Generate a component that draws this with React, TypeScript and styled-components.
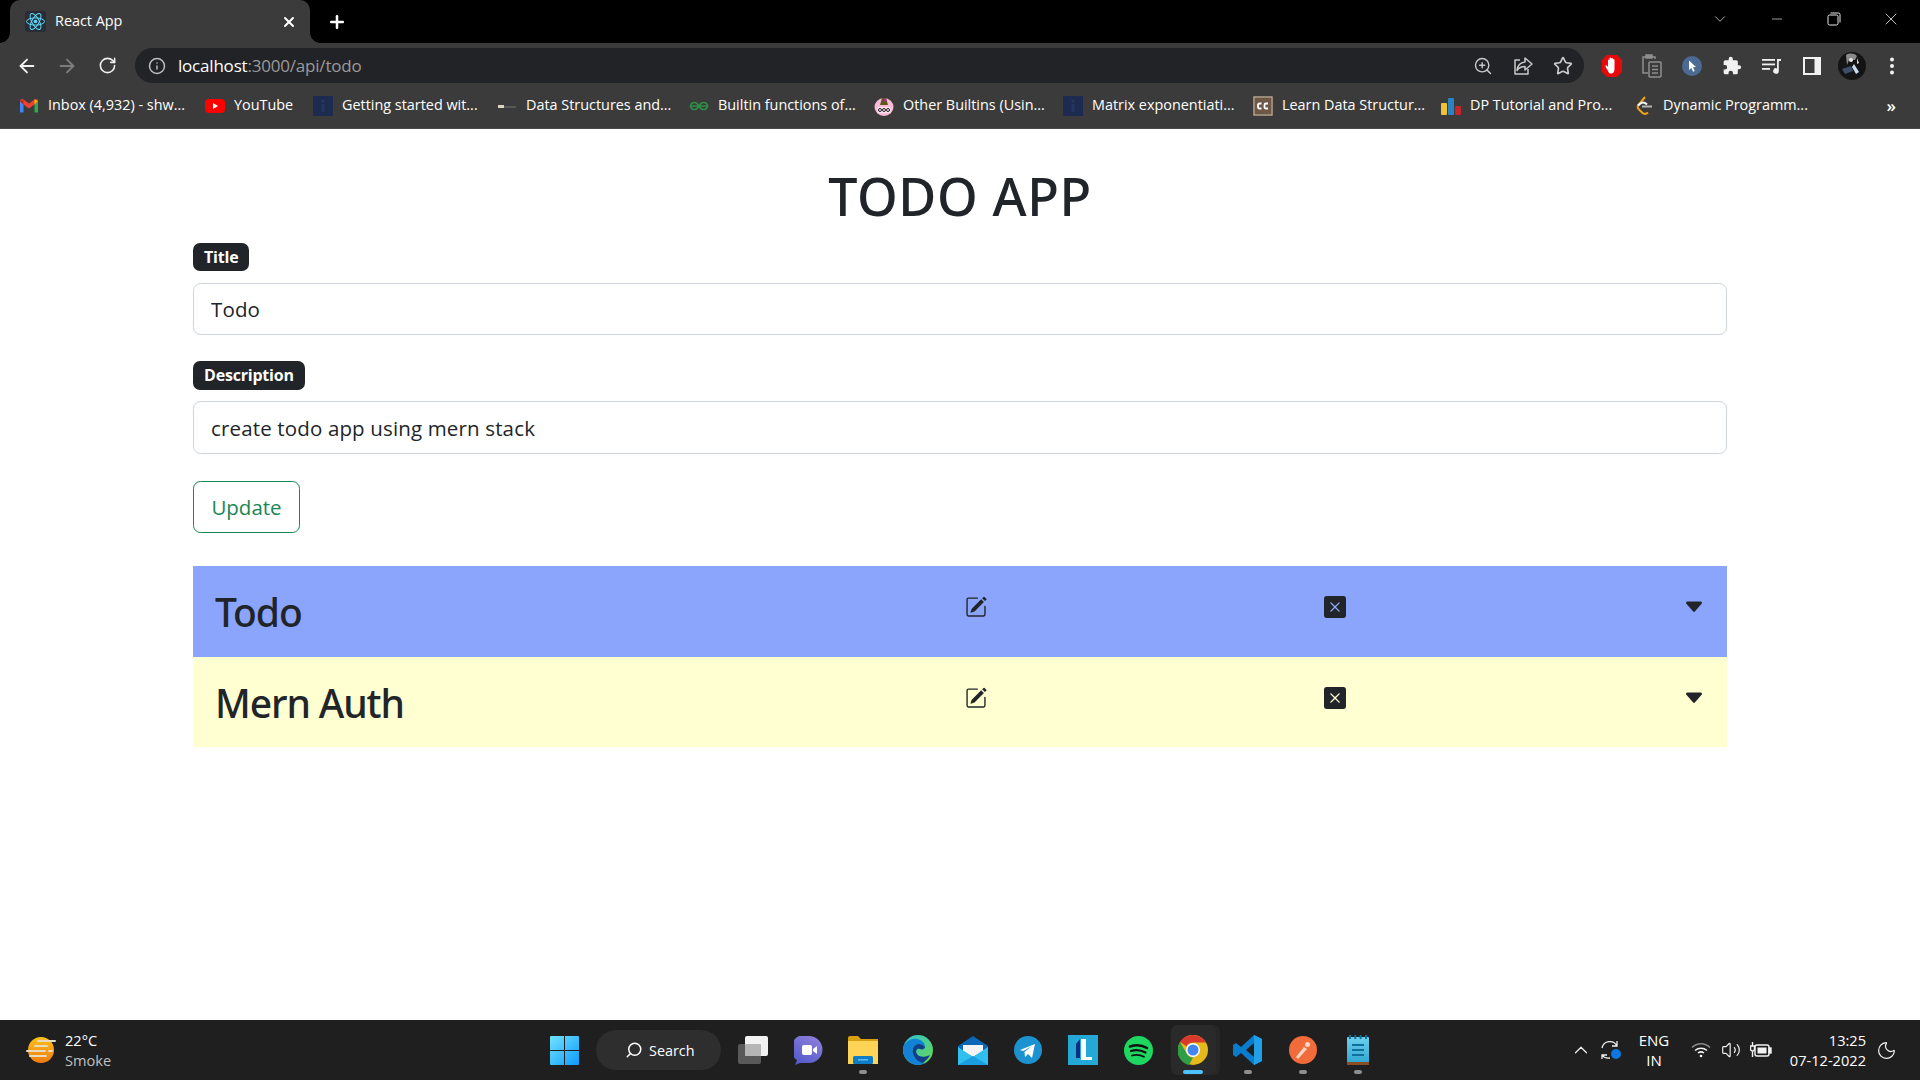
import React from "react";
import styled, { createGlobalStyle } from "styled-components";
import { ArrowLeft, ArrowRight, RotateCw, Info, ZoomIn, Star, X, Plus, ChevronDown, ChevronUp, Minus, Search, Volume2, Moon } from "lucide-react";
import { BsPencilSquare, BsXSquareFill, BsCaretDownFill } from "react-icons/bs";

const UI = `"Open Sans", "Noto Sans", "Liberation Sans", sans-serif`;
const HEAD = `"Noto Sans", "Open Sans", "Liberation Sans", sans-serif`;

const Global = createGlobalStyle`
  html, body { margin: 0; padding: 0; height: 100%; overflow: hidden; background: #fff; }
  #root { height: 100%; }
  * { box-sizing: border-box; }
`;

const Screen = styled.div`
  height: 1080px;
  width: 1920px;
  display: flex;
  flex-direction: column;
  font-family: ${UI};
  overflow: hidden;
`;

/* browser chrome */
const TabStrip = styled.div`
  height: 43px;
  background: #000;
  display: flex;
  align-items: flex-start;
  padding-left: 10px;
  flex: none;
`;
const Tab = styled.div`
  position: relative;
  width: 300px;
  height: 43px;
  background: #3b3b3b;
  border-radius: 10px 10px 0 0;
  display: flex;
  align-items: center;
  padding: 0 13px 0 15px;
  color: #fff;
  font-size: 14.4px;
  &::before, &::after {
    content: "";
    position: absolute;
    bottom: 0;
    width: 10px;
    height: 10px;
  }
  &::before { left: -10px; background: radial-gradient(circle at 0 0, #000 9.5px, #3b3b3b 10px); }
  &::after { right: -10px; background: radial-gradient(circle at 100% 0, #000 9.5px, #3b3b3b 10px); }
`;
const TabTitle = styled.span`
  flex: 1;
  margin: 0 0 2px 9px;
`;
const NewTab = styled.div`
  width: 34px;
  height: 43px;
  margin-left: 10px;
  display: flex;
  align-items: center;
  justify-content: center;
  color: #fff;
`;
const WindowControls = styled.div`
  margin-left: auto;
  display: flex;
  height: 38px;
  color: #e8e8e8;
  padding-right: 1px;
`;
const WindowButton = styled.div`
  width: 57px;
  height: 38px;
  display: flex;
  align-items: center;
  justify-content: center;
`;
const Toolbar = styled.div`
  height: 40px;
  flex: none;
  background: #3b3b3b;
  display: flex;
  align-items: center;
  padding: 5px 0 0 7px;
`;
const NavButton = styled.div<{ $dim?: boolean }>`
  width: 40px;
  height: 35px;
  display: flex;
  align-items: center;
  justify-content: center;
  color: ${(p) => (p.$dim ? "#7d7d7d" : "#f1f1f1")};
`;
const Omnibox = styled.div`
  width: 1449px;
  height: 35px;
  margin-left: 8px;
  background: #222327;
  border-radius: 18px;
  display: flex;
  align-items: center;
  padding: 0 1px 0 12px;
`;
const SiteInfo = styled.div`
  width: 20px;
  height: 20px;
  color: #bdbdbd;
  display: flex;
  align-items: center;
  justify-content: center;
`;
const Url = styled.div`
  margin-left: 11px;
  font-size: 17px;
  letter-spacing: -0.2px;
  color: #9a9a9a;
  flex: 1;
  white-space: nowrap;
`;
const UrlHost = styled.span`
  color: #fff;
`;
const OmniAction = styled.div`
  width: 40px;
  height: 35px;
  display: flex;
  align-items: center;
  justify-content: center;
  color: #c9c9c9;
`;
const Extensions = styled.div`
  display: flex;
  align-items: center;
  margin-left: 8px;
`;
const ExtensionButton = styled.div`
  width: 40px;
  height: 35px;
  display: flex;
  align-items: center;
  justify-content: center;
  color: #f1f1f1;
`;
const Bookmarks = styled.div`
  height: 46px;
  flex: none;
  background: #3b3b3b;
  display: flex;
  align-items: center;
  padding-left: 19px;
  gap: 19px;
  border-bottom: 1px solid #4a4a4a;
  color: #fff;
  font-size: 14.4px;
  white-space: nowrap;
  position: relative;
`;
const Bookmark = styled.div`
  display: flex;
  align-items: center;
  gap: 9px;
`;
const BookmarkText = styled.span<{ $w: number }>`
  width: ${(p) => p.$w}px;
  display: block;
  padding-bottom: 2px;
`;
const More = styled.div`
  margin-left: auto;
  margin-right: 24px;
  font-size: 17px;
  font-weight: 600;
`;

/* page */
const Page = styled.main`
  flex: 1;
  background: #fff;
  color: #212529;
  display: flex;
  flex-direction: column;
  align-items: center;
  padding-top: 37px;
`;
const Container = styled.div`
  width: 1534px;
`;
const Heading = styled.h1`
  margin: 0 0 17px;
  text-align: center;
  font-family: ${HEAD};
  font-size: 52px;
  line-height: 60px;
  font-weight: 500;
  letter-spacing: 0.6px;
`;
const Badge = styled.label<{ $h: number }>`
  display: block;
  width: fit-content;
  background: #212529;
  color: #fff;
  font-weight: 700;
  font-size: 16px;
  line-height: ${(p) => p.$h}px;
  height: ${(p) => p.$h}px;
  padding: 0 11px;
  border-radius: 7px;
  letter-spacing: -0.2px;
`;
const Field = styled.input<{ $h: number; $top: number }>`
  display: block;
  width: 100%;
  height: ${(p) => p.$h}px;
  margin: ${(p) => p.$top}px 0 26px;
  padding: 0 17px;
  font-family: ${UI};
  font-size: 20.5px;
  letter-spacing: 0.15px;
  color: #212529;
  background: #fff;
  border: 1px solid #ced4da;
  border-radius: 7.5px;
  outline: none;
`;
const UpdateButton = styled.button`
  display: block;
  width: 107px;
  height: 52px;
  margin-top: 27px;
  padding: 0;
  font-family: ${UI};
  font-size: 20.5px;
  color: #198754;
  background: #fff;
  border: 1px solid #198754;
  border-radius: 7.5px;
`;
const TodoList = styled.div`
  margin-top: 33px;
`;
const TodoRow = styled.div<{ $bg: string }>`
  height: 90.5px;
  background: ${(p) => p.$bg};
  display: grid;
  grid-template-columns: 750px 359px 359px 1fr;
  padding: 0 22px;
  align-items: start;
  font-size: 22px;
`;
const TodoTitle = styled.h2`
  margin: 0;
  font-family: ${HEAD};
  font-size: 39px;
  line-height: 48px;
  font-weight: 500;
  padding-top: 22px;
  letter-spacing: -1.1px;
`;
const TodoAction = styled.div`
  padding-top: 30px;
  height: 52px;
  display: flex;
  align-items: flex-start;
  color: #212529;
`;

/* taskbar */
const Taskbar = styled.footer`
  height: 60px;
  flex: none;
  background: #1f1f1f;
  display: flex;
  align-items: center;
  padding-left: 26px;
  color: #fff;
`;
const Weather = styled.div`
  width: 524px;
  display: flex;
  align-items: center;
  gap: 9px;
`;
const WeatherText = styled.div`
  font-size: 14.6px;
  line-height: 20px;
`;
const Muted = styled.div`
  color: #c0c0c0;
`;
const StartIcon = styled.div`
  width: 29px;
  height: 29px;
  display: flex;
`;
const SearchPill = styled.div`
  width: 125px;
  height: 40px;
  margin-left: 17px;
  background: #2e2e2e;
  border-radius: 20px;
  display: flex;
  align-items: center;
  padding-left: 29px;
  gap: 6px;
  font-size: 14.4px;
`;
const Apps = styled.div`
  display: flex;
  margin-left: 4.5px;
`;
const AppCell = styled.div<{ $active?: boolean }>`
  position: relative;
  width: 55px;
  height: 50px;
  display: flex;
  align-items: center;
  justify-content: center;
  border-radius: 6px;
  ${(p) => p.$active && `
    background: #2a2a2a;
    width: 45px;
    margin: 0 5px;
    box-shadow: 4px 0 0 #262626;
  `}
`;
const RunDot = styled.span<{ $active?: boolean }>`
  position: absolute;
  left: 50%;
  bottom: 1px;
  transform: translateX(-50%);
  width: ${(p) => (p.$active ? "20px" : "8px")};
  height: 4px;
  border-radius: 2px;
  background: ${(p) => (p.$active ? "#4cc2ff" : "#8e8e8e")};
`;
const Tray = styled.div`
  margin-left: auto;
  display: flex;
  align-items: center;
  padding-right: 23px;
`;
const TrayIcon = styled.div<{ $w: number }>`
  width: ${(p) => p.$w}px;
  display: flex;
  justify-content: center;
  align-items: center;
  color: #f2f2f2;
`;
const Lang = styled.div`
  width: 58px;
  text-align: center;
  font-size: 15px;
  line-height: 20px;
  margin-right: 3px;
`;
const Clock = styled.div`
  text-align: right;
  font-size: 14.6px;
  line-height: 20px;
  width: 90px;
  margin-right: 10px;
`;

/* drawings */
const ReactLogo = () => (
  <svg width="21" height="21" viewBox="0 0 21 21">
    <rect width="21" height="21" rx="3" fill="#282c34" />
    <g fill="none" stroke="#61dafb" strokeWidth="1">
      <ellipse cx="10.5" cy="10.5" rx="9" ry="3.6" />
      <ellipse cx="10.5" cy="10.5" rx="9" ry="3.6" transform="rotate(60 10.5 10.5)" />
      <ellipse cx="10.5" cy="10.5" rx="9" ry="3.6" transform="rotate(120 10.5 10.5)" />
    </g>
    <circle cx="10.5" cy="10.5" r="1.8" fill="#61dafb" />
  </svg>
);
const Gmail = () => (
  <svg width="20" height="20" viewBox="0 0 20 20">
    <path d="M1 5v11.5h3.5V8.5z" fill="#4285f4" />
    <path d="M19 5v11.5h-3.5V8.5z" fill="#34a853" />
    <path d="M1 5c0-2 2.2-2.6 3.5-1.6L10 7.6l5.5-4.2C16.8 2.4 19 3 19 5l-3.5 3.5L10 12.6 4.5 8.5z" fill="#ea4335" />
    <path d="M15.5 3.4 19 5l-3.500 3.500z" fill="#fbbc04" />
    <path d="M4.5 3.400 1 5l3.500 3.500z" fill="#c5221f" />
  </svg>
);
const Youtube = () => (
  <svg width="20" height="20" viewBox="0 0 20 20">
    <rect y="3" width="20" height="14" rx="4" fill="#f00" />
    <path d="M8 7l5 3-5 3z" fill="#fff" />
  </svg>
);
const BlueDoc = () => (
  <svg width="20" height="20" viewBox="0 0 20 20">
    <rect width="20" height="20" fill="#1c2b4f" />
    <rect x="8.500" y="8" width="3" height="8" fill="#24375f" />
    <rect x="8.500" y="3.500" width="3" height="3" fill="#24375f" />
  </svg>
);
const DsIcon = () => (
  <svg width="20" height="20" viewBox="0 0 20 20">
    <rect x="1" y="9" width="6" height="3" fill="#e0d3c0" />
    <rect x="7" y="10.500" width="12" height="1" fill="#777" />
  </svg>
);
const Gfg = () => (
  <svg width="20" height="20" viewBox="0 0 20 20" fill="none" stroke="#2f8d46" strokeWidth="1.600">
    <path d="M10 10H1.500c.5-2.500 2-3.500 4-3.500 1.500 0 3 1 4.500 3.500 1.500-2.500 3-3.500 4.500-3.500 2 0 3.500 1 4 3.500H10" />
    <path d="M1.500 10c.5 2.500 2 3.500 4 3.500 1.500 0 3-1 4.500-3.500 1.500 2.500 3 3.500 4.500 3.500 2 0 3.500-1 4-3.500" />
  </svg>
);
const Gcc = () => (
  <svg width="20" height="20" viewBox="0 0 20 20">
    <ellipse cx="10" cy="11" rx="9.500" ry="9" fill="#f8bcd8" />
    <path d="M6 9l2-7 4 0 2 7z" fill="#5b5a1c" />
    <circle cx="11" cy="4" r="1.500" fill="#c0209a" />
    <rect x="3.500" y="11" width="13" height="6" rx="1" fill="#f8e3ee" />
    <circle cx="6" cy="14" r="1.500" fill="none" stroke="#222" />
    <circle cx="10" cy="14" r="1.500" fill="none" stroke="#222" />
    <circle cx="14" cy="14" r="1.500" fill="none" stroke="#222" />
  </svg>
);
const CcIcon = () => (
  <svg width="20" height="20" viewBox="0 0 20 20">
    <rect width="20" height="20" fill="#6d5847" />
    <rect x="1" y="1" width="18" height="18" fill="none" stroke="#c8b9a8" />
    <path d="M8.500 7.500H6.500a1.500 1.500 0 0 0-1.500 1.500v2a1.500 1.500 0 0 0 1.500 1.500h2M15 7.500h-2a1.500 1.500 0 0 0-1.500 1.500v2a1.500 1.500 0 0 0 1.500 1.500h2" fill="none" stroke="#fff" strokeWidth="1.800" />
  </svg>
);
const DpBars = () => (
  <svg width="20" height="20" viewBox="0 0 20 20">
    <rect x="0" y="7" width="6" height="12" rx="1" fill="#f2c037" />
    <rect x="7" y="2" width="6" height="17" rx="1" fill="#2b83c6" />
    <rect x="14" y="10" width="6" height="9" rx="1" fill="#c5262b" />
  </svg>
);
const LeetCode = () => (
  <svg width="20" height="20" viewBox="0 0 20 20" fill="none" strokeWidth="2">
    <path d="M11 1 4 9.500" stroke="#f0a019" />
    <path d="M4 9.500c-1 2 0 3 1 4l3 3c2 2 4 2 6 0" stroke="#f0a019" />
    <path d="M8 10.500h10" stroke="#b3b3b3" />
    <path d="M4 9.500c1-1 3-3 5-3 2 0 3 1 4 2" stroke="#f5f5f5" />
  </svg>
);
const ShareIcon = () => (
  <svg width="22" height="22" viewBox="0 0 22 22" fill="none" stroke="#c9c9c9" strokeWidth="1.500" strokeLinejoin="round">
    <path d="M8 5H3v14h13v-5" />
    <path d="M13 3l7 6-7 6v-3.500c-4 0-6 1-8 4 .5-5 3.500-8 8-8.500z" />
  </svg>
);
const AdBlock = () => (
  <svg width="22" height="24" viewBox="0 0 22 24">
    <path d="M6 1h10l5 5v12l-5 5H6l-5-5V6z" fill="#e8090b" />
    <path d="M7 17c-1-2-2.500-4-2.500-5 0-1 1.200-1 1.800 0L7 13V6.500c0-1.200 1.500-1.200 1.500 0V11V4.500c0-1.200 1.700-1.200 1.700 0V11V4.800c0-1.200 1.700-1.200 1.700 0V11V6c0-1.200 1.600-1.200 1.600 0v9c0 3-1.500 4.500-3.500 4.500S8 19 7 17z" fill="#fff" />
  </svg>
);
const Clipboard = () => (
  <svg width="20" height="24" viewBox="0 0 20 24" fill="none" stroke="#8f8f8f" strokeWidth="1.500">
    <path d="M13 5V3H1v16h5" />
    <rect x="4" y="1" width="6" height="3" fill="#8f8f8f" />
    <rect x="7" y="8" width="12" height="15" rx="1" />
    <path d="M10 12h6M10 15.500h6M10 19h6" />
  </svg>
);
const CursorExt = () => (
  <svg width="20" height="22" viewBox="0 0 20 22">
    <circle cx="10" cy="11" r="10" fill="#4c6b94" />
    <path d="M7 5.500l7 6.500-3 .3 1.700 3.700-1.600.7-1.700-3.700L7 15z" fill="#fff" />
  </svg>
);
const PuzzleFill = () => (
  <svg width="20" height="20" viewBox="0 0 24 24" fill="#f1f1f1">
    <path d="M20.500 11H19V7a2 2 0 0 0-2-2h-4V3.500a2.500 2.500 0 0 0-5 0V5H4a2 2 0 0 0-2 2v3.800h1.500a2.700 2.700 0 0 1 0 5.400H2V20a2 2 0 0 0 2 2h3.800v-1.500a2.700 2.700 0 0 1 5.400 0V22H17a2 2 0 0 0 2-2v-4h1.500a2.500 2.500 0 0 0 0-5z" />
  </svg>
);
const MediaIcon = () => (
  <svg width="20" height="20" viewBox="0 0 20 20" fill="#f1f1f1">
    <rect x="0" y="3" width="13" height="1.800" />
    <rect x="0" y="7.500" width="13" height="1.800" />
    <rect x="0" y="12" width="8" height="1.800" />
    <path d="M15 3h4v2h-2.200v10a2.800 2.800 0 1 1-1.800-2.600z" />
  </svg>
);
const SidePanel = () => (
  <svg width="18" height="18" viewBox="0 0 18 18">
    <rect width="18" height="18" fill="#f1f1f1" />
    <rect x="2" y="2" width="9.500" height="14" fill="#3b3b3b" />
  </svg>
);
const Avatar = () => (
  <svg width="28" height="28" viewBox="0 0 28 28">
    <circle cx="14" cy="14" r="14" fill="#141414" />
    <path d="M8 3c3-2 8-2 11 1l-2 4-6 0-2 5z" fill="#8a8a8a" />
    <circle cx="13" cy="8" r="2" fill="#e6e6e6" />
    <path d="M4 17l9-3 2 5-8 3z" fill="#3d4f66" />
    <path d="M16 12l5 8-3 2-4-7z" fill="#c9dcee" />
    <path d="M19 6l2 5-2 1z" fill="#d9d9d9" />
  </svg>
);
const Dots = () => (
  <svg width="6" height="18" viewBox="0 0 6 18" fill="#f1f1f1">
    <circle cx="3" cy="2.500" r="2" />
    <circle cx="3" cy="9" r="2" />
    <circle cx="3" cy="15.500" r="2" />
  </svg>
);
const RestoreIcon = () => (
  <svg width="14" height="14" viewBox="0 0 14 14" fill="none" stroke="#e8e8e8">
    <rect x="1" y="3" width="10" height="10" rx="1.500" />
    <path d="M3.500 1H11.500a1.500 1.500 0 0 1 1.500 1.500V10.500" />
  </svg>
);
const WeatherIcon = () => (
  <svg width="30" height="28" viewBox="0 0 30 28">
    <defs>
      <linearGradient id="sun" x1="0" y1="0" x2="0" y2="1">
        <stop offset="0" stopColor="#ffc21a" />
        <stop offset="1" stopColor="#ee7a12" />
      </linearGradient>
    </defs>
    <circle cx="15" cy="14" r="13" fill="url(#sun)" />
    <g stroke="#e8dcc0" strokeWidth="2" strokeLinecap="round">
      <path d="M12 5h17M9 10h12M1 15h18M23 15h3M4 20h16" />
    </g>
  </svg>
);
const WinLogo = () => (
  <svg width="29" height="29" viewBox="0 0 29 29">
    <defs>
      <linearGradient id="win" x1="0" y1="0" x2="1" y2="1">
        <stop offset="0" stopColor="#6fe3ff" />
        <stop offset="1" stopColor="#0f9bfa" />
      </linearGradient>
    </defs>
    <path d="M0 1a1 1 0 0 1 1-1h13v14H0zM15 0h13a1 1 0 0 1 1 1v13H15zM0 15h14v14H1a1 1 0 0 1-1-1zM15 15h14v13a1 1 0 0 1-1 1H15z" fill="url(#win)" />
  </svg>
);
const TaskView = () => (
  <svg width="30" height="28" viewBox="0 0 30 28">
    <rect x="0" y="8" width="23" height="20" rx="2" fill="#595959" />
    <rect x="7" y="0" width="23" height="20" rx="2" fill="#f2f2f2" />
    <rect x="7" y="8" width="16" height="12" rx="1" fill="#b5b5b5" />
  </svg>
);
const Teams = () => (
  <svg width="29" height="29" viewBox="0 0 29 29">
    <defs>
      <linearGradient id="teams" x1="0.8" y1="0" x2="0.2" y2="1">
        <stop offset="0" stopColor="#8f7fdc" />
        <stop offset="1" stopColor="#5059c9" />
      </linearGradient>
    </defs>
    <path d="M15 0a13.500 13.500 0 0 1 0 27H6l-5 2 2-5A13.500 13.500 0 0 1 15 0z" fill="url(#teams)" />
    <rect x="8" y="9" width="10" height="10" rx="2" fill="#fff" />
    <path d="M19 13l4-3v8l-4-3z" fill="#fff" />
  </svg>
);
const Explorer = () => (
  <svg width="30" height="28" viewBox="0 0 30 28">
    <path d="M0 2a2 2 0 0 1 2-2h8l3 3h17v8H0z" fill="#d99f10" />
    <path d="M0 5h30v23H0z" fill="#fdd456" />
    <rect x="5" y="20" width="20" height="8" rx="1.500" fill="#0f7dc6" />
    <rect x="10" y="23" width="10" height="1.600" fill="#5cb6ec" />
  </svg>
);
const Edge = () => (
  <svg width="30" height="30" viewBox="0 0 30 30">
    <defs>
      <linearGradient id="edge" x1="0" y1="0" x2="1" y2="1">
        <stop offset="0" stopColor="#2cc3d5" />
        <stop offset="1" stopColor="#6ad84c" />
      </linearGradient>
    </defs>
    <circle cx="15" cy="15" r="15" fill="url(#edge)" />
    <path d="M0 15C0 7 8 3 14 4c5 1 8 4 8 8-1-2-4-3-6-3-6 0-8 7-5 12 2 4 6 6 11 7a15 15 0 0 1-7 2C7 30 0 23 0 15z" fill="#1182d6" />
    <path d="M11 21c-3-5-1-12 5-12 2 0 5 1 6 3 0 2-3 3-5 2-3-1-5 2-3 5 2 3 7 4 13 1-2 4-5 6-7 8-4-1-7-3-9-7z" fill="#123f8a" />
  </svg>
);
const Mail = () => (
  <svg width="30" height="29" viewBox="0 0 30 29">
    <path d="M0 10 15 0l15 10v19H0z" fill="#0a68b7" />
    <path d="M5 9h20v6L15 21 5 15z" fill="#f4f4f4" />
    <path d="M0 11l15 10 15-10v18H0z" fill="#2fc0f0" />
    <path d="M0 29l15-9 15 9z" fill="#1b9ee0" />
  </svg>
);
const Telegram = () => (
  <svg width="28" height="28" viewBox="0 0 28 28">
    <circle cx="14" cy="14" r="14" fill="#1c93d0" />
    <path d="M6 14 21 8l-3 14-4-4-3 3-.5-5 7-6-8 5z" fill="#fff" />
  </svg>
);
const LApp = () => (
  <svg width="30" height="30" viewBox="0 0 30 30">
    <rect width="30" height="30" fill="#24a9d6" />
    <path d="M8 9l4-5v19H8z" fill="#0e2d85" />
    <path d="M13 4h5v18h6v3H13z" fill="#fff" />
  </svg>
);
const Spotify = () => (
  <svg width="29" height="29" viewBox="0 0 29 29">
    <circle cx="14.500" cy="14.500" r="14.500" fill="#1ed760" />
    <g fill="none" stroke="#111" strokeLinecap="round">
      <path d="M6 10.500c6-2 12-1.500 17 1.500" strokeWidth="2.600" />
      <path d="M7 15c5-1.500 10-1 14.500 1.500" strokeWidth="2.200" />
      <path d="M8 19.500c4-1 8-.8 12 1.200" strokeWidth="1.800" />
    </g>
  </svg>
);
const Chrome = () => (
  <svg width="30" height="30" viewBox="0 0 30 30">
    <circle cx="15" cy="15" r="15" fill="#e5b81b" />
    <path d="M15 0a15 15 0 0 1 13 7.500H15a7.500 7.500 0 0 0-6.500 3.750L2 7A15 15 0 0 1 15 0z" fill="#d93a2b" />
    <path d="M2 7l6.500 11.250A7.500 7.500 0 0 0 15 22.500L11 30A15 15 0 0 1 2 7z" fill="#2f9e44" />
    <circle cx="15" cy="15" r="7" fill="#fff" />
    <circle cx="15" cy="15" r="5.500" fill="#3f85f4" />
  </svg>
);
const VSCode = () => (
  <svg width="30" height="30" viewBox="0 0 30 30">
    <path d="M21 0l8 4v22l-8 4-13-12-5 4-3-2V10l3-2 5 4zM21 8l-8 7 8 7z" fill="#0a7ccc" />
    <path d="M21 0l8 4v22l-8 4z" fill="#21a0ea" />
  </svg>
);
const Postman = () => (
  <svg width="28" height="28" viewBox="0 0 28 28">
    <circle cx="14" cy="14" r="14" fill="#f26b3a" />
    <path d="M7 21l8-10 3 2-9 10z" fill="#f6d6c8" />
    <circle cx="18.500" cy="8.500" r="2.500" fill="#f6d6c8" />
  </svg>
);
const Notepad = () => (
  <svg width="24" height="30" viewBox="0 0 24 30">
    <defs>
      <linearGradient id="pad" x1="0" y1="0" x2="0" y2="1">
        <stop offset="0" stopColor="#6ed0ee" />
        <stop offset="1" stopColor="#2ba3cf" />
      </linearGradient>
    </defs>
    <rect x="1" y="2" width="22" height="28" rx="1" fill="url(#pad)" />
    <rect x="1" y="27" width="22" height="3" fill="#8a4f22" />
    <path d="M6 10h12M6 15h12M6 20h12" stroke="#0f6f9c" strokeWidth="2" />
    <path d="M4 0v4M9.300 0v4M14.600 0v4M20 0v4" stroke="#0f6f9c" strokeWidth="2" />
  </svg>
);
const SyncIcon = () => (
  <svg width="22" height="22" viewBox="0 0 22 22" fill="none" stroke="#f2f2f2" strokeWidth="1.300">
    <path d="M2 9a8 8 0 0 1 15-2M17 2v5h-5" />
    <path d="M2 20v-4h5M2 16c2 3 5 3.500 8 3" />
    <circle cx="16" cy="15" r="5" fill="#0a78e0" stroke="none" />
  </svg>
);
const Wifi = () => (
  <svg width="20" height="16" viewBox="0 0 20 16" fill="none" stroke="#f2f2f2" strokeWidth="1.500">
    <path d="M1 5.500c5-5 13-5 18 0" stroke="#8a8a8a" />
    <path d="M4 8.500c3.500-3 8.500-3 12 0" />
    <path d="M7 11c2-1.500 4-1.500 6 0" />
    <circle cx="10" cy="14" r="1.300" fill="#f2f2f2" stroke="none" />
  </svg>
);
const Battery = () => (
  <svg width="22" height="16" viewBox="0 0 22 16" fill="none" stroke="#f2f2f2" strokeWidth="1.400">
    <rect x="5" y="3" width="14" height="11" rx="2" />
    <rect x="7.500" y="5.500" width="9" height="6" fill="#f2f2f2" stroke="none" />
    <rect x="19" y="6" width="2" height="5" fill="#f2f2f2" />
    <path d="M2.500 0v4M.5 4h4v3a2 2 0 0 1-4 0zM2.500 9v6" />
  </svg>
);

const marks: { icon: React.ReactNode; text: string; w: number }[] = [
  { icon: <Gmail />, text: "Inbox (4,932) - shw...", w: 138 },
  { icon: <Youtube />, text: "YouTube", w: 60 },
  { icon: <BlueDoc />, text: "Getting started wit...", w: 136 },
  { icon: <DsIcon />, text: "Data Structures and...", w: 144 },
  { icon: <Gfg />, text: "Builtin functions of...", w: 137 },
  { icon: <Gcc />, text: "Other Builtins (Usin...", w: 141 },
  { icon: <BlueDoc />, text: "Matrix exponentiati...", w: 142 },
  { icon: <CcIcon />, text: "Learn Data Structur...", w: 140 },
  { icon: <DpBars />, text: "DP Tutorial and Pro...", w: 145 },
  { icon: <LeetCode />, text: "Dynamic Programm...", w: 142 },
];

const apps: { icon: React.ReactNode; dot?: boolean; active?: boolean }[] = [
  { icon: <TaskView /> },
  { icon: <Teams /> },
  { icon: <Explorer />, dot: true },
  { icon: <Edge /> },
  { icon: <Mail /> },
  { icon: <Telegram /> },
  { icon: <LApp /> },
  { icon: <Spotify /> },
  { icon: <Chrome />, active: true },
  { icon: <VSCode />, dot: true },
  { icon: <Postman />, dot: true },
  { icon: <Notepad />, dot: true },
];

const todos = [
  { title: "Todo", bg: "#8aa5fb" },
  { title: "Mern Auth", bg: "#ffffd1" },
];

export default function App() {
  return (
    <Screen>
      <Global />
      <TabStrip>
        <Tab>
          <ReactLogo />
          <TabTitle>React App</TabTitle>
          <X size={16} strokeWidth={3} />
        </Tab>
        <NewTab>
          <Plus size={20} strokeWidth={3} />
        </NewTab>
        <WindowControls>
          <WindowButton><ChevronDown size={18} strokeWidth={1} /></WindowButton>
          <WindowButton><Minus size={16} strokeWidth={1} /></WindowButton>
          <WindowButton><RestoreIcon /></WindowButton>
          <WindowButton><X size={20} strokeWidth={1} /></WindowButton>
        </WindowControls>
      </TabStrip>
      <Toolbar>
        <NavButton><ArrowLeft size={22} strokeWidth={2} /></NavButton>
        <NavButton $dim><ArrowRight size={22} strokeWidth={2} /></NavButton>
        <NavButton><RotateCw size={19} strokeWidth={2} /></NavButton>
        <Omnibox>
          <SiteInfo><Info size={18} strokeWidth={2} /></SiteInfo>
          <Url><UrlHost>localhost</UrlHost>:3000/api/todo</Url>
          <OmniAction><ZoomIn size={20} strokeWidth={1.7} /></OmniAction>
          <OmniAction><ShareIcon /></OmniAction>
          <OmniAction><Star size={20} strokeWidth={2} /></OmniAction>
        </Omnibox>
        <Extensions>
          <ExtensionButton><AdBlock /></ExtensionButton>
          <ExtensionButton><Clipboard /></ExtensionButton>
          <ExtensionButton><CursorExt /></ExtensionButton>
          <ExtensionButton><PuzzleFill /></ExtensionButton>
          <ExtensionButton><MediaIcon /></ExtensionButton>
          <ExtensionButton><SidePanel /></ExtensionButton>
          <ExtensionButton><Avatar /></ExtensionButton>
          <ExtensionButton><Dots /></ExtensionButton>
        </Extensions>
      </Toolbar>
      <Bookmarks>
        {marks.map((m) => (
          <Bookmark key={m.text}>
            {m.icon}
            <BookmarkText $w={m.w}>{m.text}</BookmarkText>
          </Bookmark>
        ))}
        <More>»</More>
      </Bookmarks>
      <Page>
        <Container>
          <Heading>TODO APP</Heading>
          <Badge $h={28}>Title</Badge>
          <Field readOnly value="Todo" $h={52} $top={12} />
          <Badge $h={29}>Description</Badge>
          <Field readOnly value="create todo app using mern stack" $h={53} $top={11} />
          <UpdateButton>Update</UpdateButton>
          <TodoList>
            {todos.map((t) => (
              <TodoRow key={t.title} $bg={t.bg}>
                <TodoTitle>{t.title}</TodoTitle>
                <TodoAction><BsPencilSquare /></TodoAction>
                <TodoAction><BsXSquareFill /></TodoAction>
                <TodoAction><BsCaretDownFill /></TodoAction>
              </TodoRow>
            ))}
          </TodoList>
        </Container>
      </Page>
      <Taskbar>
        <Weather>
          <WeatherIcon />
          <WeatherText>
            22°C
            <Muted>Smoke</Muted>
          </WeatherText>
        </Weather>
        <StartIcon><WinLogo /></StartIcon>
        <SearchPill>
          <Search size={18} strokeWidth={2} style={{ transform: "scaleX(-1)" }} />
          Search
        </SearchPill>
        <Apps>
          {apps.map((a, i) => (
            <AppCell key={i} $active={a.active}>
              {a.icon}
              {(a.dot || a.active) && <RunDot $active={a.active} />}
            </AppCell>
          ))}
        </Apps>
        <Tray>
          <TrayIcon $w={30}><ChevronUp size={22} strokeWidth={1.3} /></TrayIcon>
          <TrayIcon $w={29}><SyncIcon /></TrayIcon>
          <Lang>ENG<br />IN</Lang>
          <TrayIcon $w={30}><Wifi /></TrayIcon>
          <TrayIcon $w={30}><Volume2 size={20} strokeWidth={1.4} /></TrayIcon>
          <TrayIcon $w={30}><Battery /></TrayIcon>
          <Clock>13:25<br />07-12-2022</Clock>
          <TrayIcon $w={21}><Moon size={21} strokeWidth={1.4} /></TrayIcon>
        </Tray>
      </Taskbar>
    </Screen>
  );
}
